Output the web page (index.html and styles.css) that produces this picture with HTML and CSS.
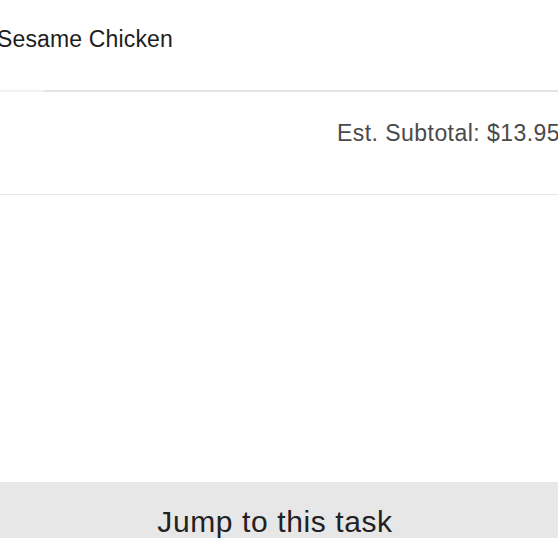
FILE: index.html
```html
<!DOCTYPE html>
<html>
<head>
<meta charset="utf-8">
<link rel="stylesheet" href="styles.css">
</head>
<body>
<div class="screen">
  <div class="item-row">
    <div class="item-name">Sesame Chicken</div>
  </div>
  <div class="divider"><div class="divider-inner"></div></div>
  <div class="subtotal-row">
    <div class="subtotal">Est. Subtotal: $13.95</div>
  </div>
  <div class="spacer"></div>
  <div class="jump-bar">
    <div class="jump-label">Jump to this task</div>
  </div>
</div>
</body>
</html>
```

FILE: styles.css
```css
html, body {
  margin: 0;
  padding: 0;
  background: #ffffff;
  overflow: hidden;
}

.screen {
  width: 558px;
  height: 538px;
  display: flex;
  flex-direction: column;
  font-family: "Liberation Sans", Arial, sans-serif;
}

.item-row {
  height: 90px;
  box-sizing: border-box;
  padding-top: 25px;
  margin-left: -3px;
}

.item-name {
  font-size: 23px;
  line-height: 28px;
  letter-spacing: 0.15px;
  color: #1d1d1d;
  white-space: nowrap;
}

.divider {
  height: 2px;
  background: #f2f2f2;
}

.divider-inner {
  margin-left: 44px;
  height: 2px;
  background: #e4e4e4;
}

.subtotal-row {
  height: 103px;
  box-sizing: border-box;
  padding-top: 27px;
  border-bottom: 1px solid #e7e7e7;
  display: flex;
  justify-content: flex-end;
  margin-right: -2px;
}

.subtotal {
  font-size: 23px;
  line-height: 28px;
  letter-spacing: 0.45px;
  color: #4a4a4a;
  white-space: nowrap;
}

.spacer {
  flex: 1;
}

.jump-bar {
  height: 56px;
  flex: none;
  background: #e7e7e7;
  box-sizing: border-box;
  padding-top: 22px;
  padding-right: 8px;
  display: flex;
  justify-content: center;
  overflow: hidden;
}

.jump-label {
  font-size: 30px;
  line-height: 36px;
  letter-spacing: 0.6px;
  color: #222222;
  white-space: nowrap;
}
```
